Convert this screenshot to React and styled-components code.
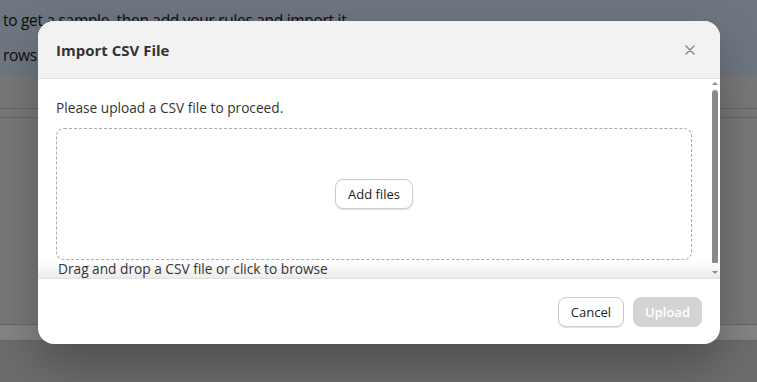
import React from 'react';
import styled, { createGlobalStyle } from 'styled-components';

const GlobalStyle = createGlobalStyle`
  html, body {
    margin: 0;
    padding: 0;
    width: 757px;
    height: 382px;
    overflow: hidden;
  }
  body {
    font-family: "Open Sans", "Noto Sans", sans-serif;
    color: #333;
  }
  * { box-sizing: border-box; }
`;

const Page = styled.div`
  position: relative;
  width: 757px;
  height: 382px;
  background: #d0d0d0;
  overflow: hidden;
`;

const Intro = styled.div`
  height: 76px;
  background: #d3e3f6;
  padding: 3px 0 0 3px;
  font-size: 15.5px;
  line-height: 35px;
  color: #15181c;
  letter-spacing: -0.3px;
`;

const TableRow = styled.div`
  height: ${p => p.$h}px;
  background: ${p => p.$bg || '#e7e7e7'};
  border-bottom: 1px solid #c4c4c4;
`;

const Overlay = styled.div`
  position: absolute;
  inset: 0;
  background: rgba(0, 0, 0, 0.48);
  display: flex;
  justify-content: center;
  align-items: flex-start;
  padding: 21px 0 0 1px;
`;

const Dialog = styled.div`
  width: 682px;
  height: 323px;
  background: #fff;
  border-radius: 16px;
  overflow: hidden;
  display: flex;
  flex-direction: column;
  box-shadow: 0 20px 45px rgba(0, 0, 0, 0.28);
`;

const Header = styled.div`
  height: 58px;
  flex: none;
  background: #f2f2f2;
  border-bottom: 1px solid #e1e1e1;
  display: flex;
  align-items: center;
  justify-content: space-between;
  padding: 0 25px 0 18px;
`;

const Title = styled.h2`
  margin: 0;
  font-size: 15px;
  font-weight: 700;
  color: #333;
`;

const CloseButton = styled.button`
  border: 0;
  background: none;
  padding: 0;
  width: 10px;
  height: 10px;
  display: flex;
  align-items: center;
  justify-content: center;
  cursor: pointer;
`;

const Body = styled.div`
  position: relative;
  flex: 1;
  overflow: hidden;
  padding: 19px 28px 0 18px;
`;

const Lead = styled.p`
  margin: 0 0 11px;
  font-size: 13.7px;
  line-height: 19px;
  color: #333;
`;

const DropZone = styled.div`
  height: 132px;
  border: 1px dashed #aaa;
  border-radius: 8px;
  display: flex;
  align-items: center;
  justify-content: center;
`;

const Hint = styled.p`
  position: relative;
  margin: 0 0 0 2px;
  font-size: 13.7px;
  line-height: 18px;
  color: #333;
`;

const Fade = styled.div`
  position: absolute;
  left: 0;
  right: 0;
  bottom: 0;
  height: 17px;
  background: linear-gradient(to bottom, rgba(240, 240, 240, 0), rgba(236, 236, 236, 1));
  pointer-events: none;
`;

const Scrollbar = styled.div`
  position: absolute;
  top: 0;
  right: 2px;
  bottom: 0;
  width: 6px;
  display: flex;
  flex-direction: column;
  align-items: center;
  padding: 3px 0 4px;
`;

const Arrow = styled.div`
  width: 0;
  height: 0;
  border-left: 3px solid transparent;
  border-right: 3px solid transparent;
  ${p => p.$down
    ? 'border-top: 3px solid #8a8a8a;'
    : 'border-bottom: 3px solid #8a8a8a;'}
`;

const Thumb = styled.div`
  width: 6px;
  flex: 1;
  margin: 5px 0 8px;
  background: #8a8a8a;
  border-radius: 3px 3px 1px 1px;
`;

const Footer = styled.div`
  height: 66px;
  flex: none;
  border-top: 1px solid #e1e1e1;
  display: flex;
  align-items: center;
  justify-content: flex-end;
  gap: 9px;
  padding: 0 18px 0 0;
`;

const Button = styled.button`
  height: 30px;
  padding: 0 ${p => p.$pad || 12}px;
  border-radius: 8px;
  font-family: inherit;
  font-size: 13px;
  cursor: pointer;
  ${p => p.$disabled ? `
    background: #d4d4d4;
    border: 1px solid #d4d4d4;
    color: #fff;
    font-weight: 600;
    cursor: default;
  ` : `
    background: #fff;
    border: 1px solid #cbcbcb;
    color: #222;
    box-shadow: 0 1px 1px rgba(0, 0, 0, 0.12);
  `}
`;

export default function App() {
  return (
    <>
      <GlobalStyle />
      <Page>
        <Intro>
          to get a sample, then add your rules and import it
          <br />
          rows.
        </Intro>
        <TableRow $h={33} />
        <TableRow $h={9} />
        <TableRow $h={207} />
        <TableRow $h={16} $bg="#fdfdfd" />
        <Overlay>
          <Dialog role="dialog" aria-labelledby="csv-title">
            <Header>
              <Title id="csv-title">Import CSV File</Title>
              <CloseButton aria-label="Close">
                <svg width="10" height="10" viewBox="0 0 10 10">
                  <path d="M1 1L9 9M9 1L1 9" stroke="#8a8a8a" strokeWidth="1.5" strokeLinecap="round" />
                </svg>
              </CloseButton>
            </Header>
            <Body>
              <Lead>Please upload a CSV file to proceed.</Lead>
              <DropZone>
                <Button $pad={12}>Add files</Button>
              </DropZone>
              <Fade />
              <Hint>Drag and drop a CSV file or click to browse</Hint>
              <Scrollbar>
                <Arrow />
                <Thumb />
                <Arrow $down />
              </Scrollbar>
            </Body>
            <Footer>
              <Button>Cancel</Button>
              <Button $disabled $pad={11}>Upload</Button>
            </Footer>
          </Dialog>
        </Overlay>
      </Page>
    </>
  );
}
